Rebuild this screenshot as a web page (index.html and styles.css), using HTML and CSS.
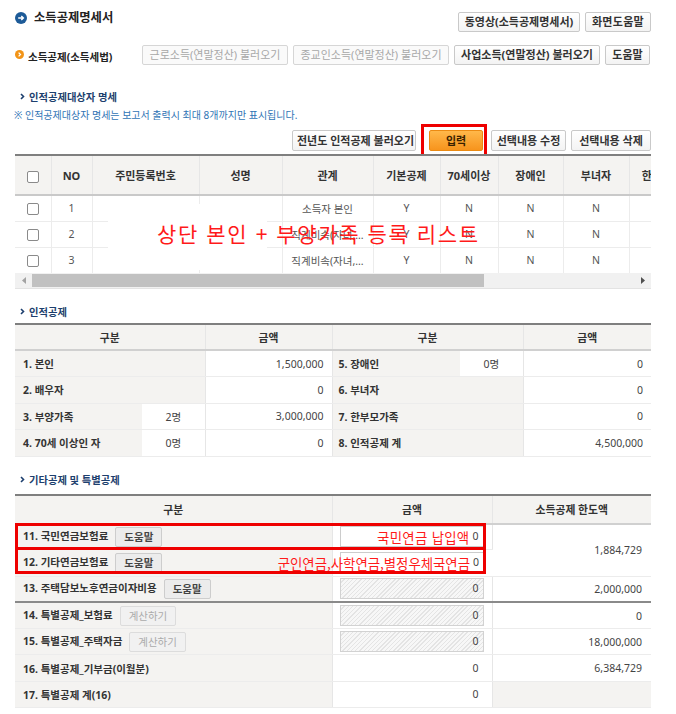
FILE: index.html
```html
<!DOCTYPE html>
<html lang="ko">
<head>
<meta charset="utf-8">
<title>소득공제명세서</title>
<link rel="stylesheet" href="styles.css">
</head>
<body>
<div class="page">
  <div class="titlebar">
    <div class="title">
      <svg class="ico-title" width="12" height="12" viewBox="0 0 12 12"><circle cx="6" cy="6" r="6" fill="#1d5b98"/><path d="M3.2 6h5M6.3 3.9 8.4 6 6.3 8.1" stroke="#fff" stroke-width="1.4" fill="none"/></svg>
      <h1>소득공제명세서</h1>
    </div>
    <div class="btns">
      <button class="btn w-video">동영상(소득공제명세서)</button>
      <button class="btn w-help">화면도움말</button>
    </div>
  </div>

  <div class="subbar">
    <div class="subtitle">
      <svg class="ico-sub" width="9" height="9" viewBox="0 0 9 9"><circle cx="4.5" cy="4.5" r="4.5" fill="#f29417"/><path d="M3.6 2.6 5.5 4.5 3.6 6.4" stroke="#fff" stroke-width="1.3" fill="none"/></svg>
      <span>소득공제(소득세법)</span>
    </div>
    <div class="btns">
      <button class="btn dis w1">근로소득(연말정산) 불러오기</button>
      <button class="btn dis w2">종교인소득(연말정산) 불러오기</button>
      <button class="btn w3">사업소득(연말정산) 불러오기</button>
      <button class="btn w4">도움말</button>
    </div>
  </div>

  <div class="sec-title first"><svg width="5" height="7" viewBox="0 0 5 7"><path d="M1 1 3.5 3.5 1 6" stroke="#1d3f6e" stroke-width="1.6" fill="none"/></svg>인적공제대상자 명세</div>
  <p class="note">※ 인적공제대상자 명세는 보고서 출력시 최대 8개까지만 표시됩니다.</p>

  <div class="actions">
    <button class="btn a1">전년도 인적공제 불러오기</button>
    <button class="btn orange">입력</button>
    <button class="btn a3">선택내용 수정</button>
    <button class="btn a4">선택내용 삭제</button>
    <div class="mark mark-input"></div>
  </div>

  <div class="grid-wrap">
    <table class="grid">
      <colgroup>
        <col style="width:36px"><col style="width:41px"><col style="width:107px"><col style="width:83px"><col style="width:91px"><col style="width:67px"><col style="width:58px"><col style="width:65px"><col style="width:66px"><col style="width:56px">
      </colgroup>
      <thead>
        <tr><th><span class="chk"></span></th><th>NO</th><th>주민등록번호</th><th>성명</th><th>관계</th><th>기본공제</th><th>70세이상</th><th>장애인</th><th>부녀자</th><th>한부모</th></tr>
      </thead>
      <tbody>
        <tr><td><span class="chk"></span></td><td>1</td><td></td><td></td><td>소득자 본인</td><td>Y</td><td>N</td><td>N</td><td>N</td><td></td></tr>
        <tr><td><span class="chk"></span></td><td>2</td><td></td><td></td><td>직계비속(자녀,...</td><td>Y</td><td>N</td><td>N</td><td>N</td><td></td></tr>
        <tr><td><span class="chk"></span></td><td>3</td><td></td><td></td><td>직계비속(자녀,...</td><td>Y</td><td>N</td><td>N</td><td>N</td><td></td></tr>
      </tbody>
    </table>
    <div class="mask"></div>
    <div class="overlay-title">상단 본인 + 부양가족 등록 리스트</div>
    <div class="hscroll">
      <span class="arr"><svg width="4" height="7" viewBox="0 0 4 7"><path d="M4 0 0 3.5 4 7z" fill="#a3a3a3"/></svg></span>
      <span class="thumb"></span>
      <span class="track"></span>
      <span class="arr"><svg width="4" height="7" viewBox="0 0 4 7"><path d="M0 0 4 3.5 0 7z" fill="#505050"/></svg></span>
    </div>
  </div>

  <div class="sec-title second"><svg width="5" height="7" viewBox="0 0 5 7"><path d="M1 1 3.5 3.5 1 6" stroke="#1d3f6e" stroke-width="1.6" fill="none"/></svg>인적공제</div>
  <table class="tbl t2">
    <colgroup><col style="width:127px"><col style="width:63px"><col style="width:127px"><col style="width:128px"><col style="width:63px"><col style="width:128px"></colgroup>
    <thead>
      <tr><th colspan="2">구분</th><th>금액</th><th colspan="2">구분</th><th>금액</th></tr>
    </thead>
    <tbody>
      <tr><th class="lbl" colspan="2">1. 본인</th><td class="amt">1,500,000</td><th class="lbl r">5. 장애인</th><td class="cnt">0명</td><td class="amt">0</td></tr>
      <tr><th class="lbl" colspan="2">2. 배우자</th><td class="amt">0</td><th class="lbl r" colspan="2">6. 부녀자</th><td class="amt">0</td></tr>
      <tr><th class="lbl">3. 부양가족</th><td class="cnt">2명</td><td class="amt">3,000,000</td><th class="lbl r" colspan="2">7. 한부모가족</th><td class="amt">0</td></tr>
      <tr><th class="lbl">4. 70세 이상인 자</th><td class="cnt">0명</td><td class="amt">0</td><th class="lbl r" colspan="2">8. 인적공제 계</th><td class="amt">4,500,000</td></tr>
    </tbody>
  </table>

  <div class="sec-title third"><svg width="5" height="7" viewBox="0 0 5 7"><path d="M1 1 3.5 3.5 1 6" stroke="#1d3f6e" stroke-width="1.6" fill="none"/></svg>기타공제 및 특별공제</div>
  <div class="t3-wrap">
    <table class="tbl t3">
      <colgroup><col style="width:317px"><col style="width:160px"><col style="width:159px"></colgroup>
      <thead>
        <tr><th>구분</th><th>금액</th><th>소득공제 한도액</th></tr>
      </thead>
      <tbody>
        <tr><th class="lbl">11. 국민연금보험료<button class="sbtn">도움말</button></th><td class="inp-cell"><div class="inp"><span class="red-note">국민연금 납입액</span>0</div></td><td class="amt lim" rowspan="2">1,884,729</td></tr>
        <tr><th class="lbl">12. 기타연금보험료<button class="sbtn">도움말</button></th><td class="inp-cell"><div class="inp"><span class="red-note wide">군인연금,사학연금,별정우체국연금</span>0</div></td></tr>
        <tr><th class="lbl">13. 주택담보노후연금이자비용<button class="sbtn">도움말</button></th><td class="inp-cell"><div class="inp hatch">0</div></td><td class="amt lim">2,000,000</td></tr>
        <tr class="split"><th class="lbl">14. 특별공제_보험료<button class="sbtn off">계산하기</button></th><td class="inp-cell"><div class="inp hatch">0</div></td><td class="amt lim">0</td></tr>
        <tr><th class="lbl">15. 특별공제_주택자금<button class="sbtn off">계산하기</button></th><td class="inp-cell"><div class="inp hatch">0</div></td><td class="amt lim">18,000,000</td></tr>
        <tr><th class="lbl">16. 특별공제_기부금(이월분)</th><td class="amt plain">0</td><td class="amt lim">6,384,729</td></tr>
        <tr><th class="lbl">17. 특별공제 계(16)</th><td class="amt plain">0</td><td class="empty"></td></tr>
      </tbody>
    </table>
    <div class="mark mark-r11"></div>
    <div class="mark mark-r12"></div>
  </div>
</div>
</body>
</html>
```

FILE: styles.css
```css
* { box-sizing: border-box; }
html, body { margin: 0; padding: 0; background: #fff; }
body {
  font-family: "Noto Sans", "Noto Sans CJK KR", sans-serif;
  font-size: 10px;
  color: #333;
}
.page { width: 651px; padding: 12px 0 0 15px; }

/* buttons */
.btns { display: flex; gap: 5px; }
.btn {
  height: 20px;
  padding: 0 4px;
  border: 1px solid #c9c9c9;
  border-radius: 2px;
  background: linear-gradient(#ffffff, #f3f3f3);
  font-family: inherit;
  font-size: 11px;
  font-weight: 700;
  color: #333;
  line-height: 18px;
  white-space: nowrap;
  text-align: center;
  cursor: pointer;
}
.btn.dis { color: #a8a8a8; font-weight: 400; border-color: #d6d6d6; background: #fafafa; }
.w-video { width: 122px; }
.w-help { width: 66px; letter-spacing: 0.3px; }
.btn.w1 { width: 146px; }
.btn.w2 { width: 156px; }
.btn.w3 { width: 146px; }
.btn.w4 { width: 45px; }

/* title bar */
.titlebar { display: flex; justify-content: space-between; align-items: flex-start; height: 20px; }
.title { display: flex; align-items: center; height: 12px; }
.ico-title { margin-right: 7px; flex: none; }
h1 { margin: 0; font-size: 12.3px; font-weight: 700; color: #222; line-height: 12px; }

.subbar { display: flex; justify-content: space-between; align-items: center; margin-top: 13px; height: 20px; }
.subtitle { display: flex; align-items: center; font-weight: 700; font-size: 10.5px; color: #222; margin-top: 3px; }
.ico-sub { margin-right: 4px; margin-top: -5px; flex: none; }
.subbar .btns { margin-right: 1px; }

/* section titles */
.sec-title {
  display: flex; align-items: center;
  height: 14px;
  padding-left: 5px;
  font-size: 10.3px; font-weight: 700; color: #1d3f6e;
}
.sec-title svg { margin-right: 4px; }
.sec-title.first { margin-top: 24px; }
.sec-title.second { margin-top: 15px; }
.sec-title.third { margin-top: 16px; }
.note { margin: 6px 0 0 -1px; height: 12px; line-height: 12px; font-size: 10px; color: #2f74b5; }

/* action row */
.actions { position: relative; display: flex; justify-content: flex-end; margin-top: 9px; height: 21px; width: 636px; }
.actions .btn { height: 21px; }
.btn.a1 { width: 124px; }
.btn.a3 { width: 75px; margin-right: 5px; }
.btn.a4 { width: 80px; }
.btn.orange {
  width: 54px;
  margin: 0 8px 0 13px;
  border-color: #eb8a12;
  background: linear-gradient(#ffb84a, #f7941d);
  color: #3a2200;
}
.mark { position: absolute; border: 3px solid #ee0000; pointer-events: none; }
.mark-input { left: 406px; top: -6px; width: 66px; height: 37px; }

/* grid (table 1) */
.grid-wrap { position: relative; width: 636px; overflow: hidden; margin-top: 3px; border-top: 2px solid #7f7f7f; border-bottom: 1px solid #e3e3e3; }
.grid { table-layout: fixed; border-collapse: collapse; width: 670px; }
.grid th {
  height: 39px;
  background: #f4f3f1;
  font-weight: 700; font-size: 11px; color: #333;
  border-right: 1px solid #e6e6e6;
  border-bottom: 2px solid #c9c9c9;
  text-align: center;
  white-space: nowrap; overflow: hidden;
}
.grid td {
  height: 26px;
  text-align: center;
  font-size: 10.5px;
  color: #555;
  border-right: 1px solid #ececec;
  border-bottom: 1px solid #ececec;
  white-space: nowrap; overflow: hidden; text-overflow: ellipsis;
}
.grid tr:last-child td { border-bottom: none; }
.chk { display: inline-block; width: 12px; height: 12px; border: 1px solid #8a8a8a; border-radius: 2px; background: #fff; vertical-align: middle; }
.mask { position: absolute; left: 93px; top: 48px; width: 159px; height: 66px; background: #fff; }
.overlay-title {
  position: absolute; left: 142px; top: 64px;
  font-family: "Noto Sans CJK KR", sans-serif;
  font-size: 21px; line-height: 26px; letter-spacing: 1.6px;
  color: #ff1a1a; white-space: nowrap;
}
.hscroll { display: flex; height: 15px; background: #f1f1f1; align-items: center; }
.hscroll .arr { width: 17px; display: flex; justify-content: center; align-items: center; }
.hscroll .thumb { width: 452px; height: 13px; background: #c1c1c1; }
.hscroll .track { flex: 1; }

/* generic tables */
.tbl { table-layout: fixed; border-collapse: collapse; width: 636px; border-top: 2px solid #7f7f7f; font-size: 10.5px; }
.tbl thead th {
  background: #f4f3f1; font-weight: 700; color: #333; text-align: center; font-size: 10.8px;
  border-right: 1px solid #e6e6e6; border-bottom: 2px solid #d0d0d0;
}
.tbl thead th:last-child { border-right: none; }
.tbl td, .tbl tbody th { border-bottom: 1px solid #ececec; border-right: 1px solid #e6e6e6; }
.tbl tr td:last-child { border-right: none; }
.tbl .lbl { background: #f4f3f1; text-align: left; font-weight: 700; color: #333; padding-left: 8px; white-space: nowrap; }
.tbl .lbl.r { padding-left: 6px; }
.tbl .amt { text-align: right; color: #444; padding-right: 8px; }
.tbl .cnt { text-align: center; color: #444; background: #fff; }
.t2 { margin-top: 5px; }
.t2 thead th { height: 26px; }
.t2 tbody td, .t2 tbody th { height: 26.5px; }
.t2 th.lbl { border-right: none; }
.t2 th.lbl[colspan] { border-right: 1px solid #e6e6e6; }

.t3-wrap { position: relative; margin-top: 7px; width: 636px; }
.t3 thead th { height: 29px; }
.t3 tbody td, .t3 tbody th { height: 26.3px; }
.t3 .lim { padding-right: 9px; }
.t3 .plain { padding-right: 13px; }
.t3 .empty { background: #f4f3f1; }
.t3 tr.split td, .t3 tr.split th { border-top: 2px solid #8a8a8a; }
.sbtn {
  height: 20px; margin-left: 7px; padding: 0 8px;
  border: 1px solid #cdcdcd; border-radius: 2px;
  background: #ececec;
  font-family: inherit; font-size: 10.5px; font-weight: 700; color: #444;
  vertical-align: middle; line-height: 18px;
}
.sbtn.off { background: #f1f1f1; color: #ababab; font-weight: 400; border-color: #dcdcdc; }
.inp-cell { padding: 0 8px 0 7px; }
.inp {
  position: relative;
  height: 21px; line-height: 19px;
  border: 1px solid #cccccc; background: #fff;
  text-align: right; padding-right: 4px; color: #444;
}
.inp.hatch { background: repeating-linear-gradient(135deg, #f7f7f7 0 2px, #e4e4e4 2px 3px); border-color: #d2d2d2; }
.red-note {
  position: absolute; right: 13px; top: 0;
  font-family: "Noto Sans CJK KR", sans-serif;
  font-size: 13.4px; line-height: 20px; color: #ff1a1a; white-space: nowrap; letter-spacing: 0.3px;
}
.red-note.wide { font-size: 13.4px; letter-spacing: 0; }
.mark-r11 { left: 0; top: 29px; width: 471px; height: 27px; }
.mark-r12 { left: 0; top: 53px; width: 471px; height: 27px; }
```
